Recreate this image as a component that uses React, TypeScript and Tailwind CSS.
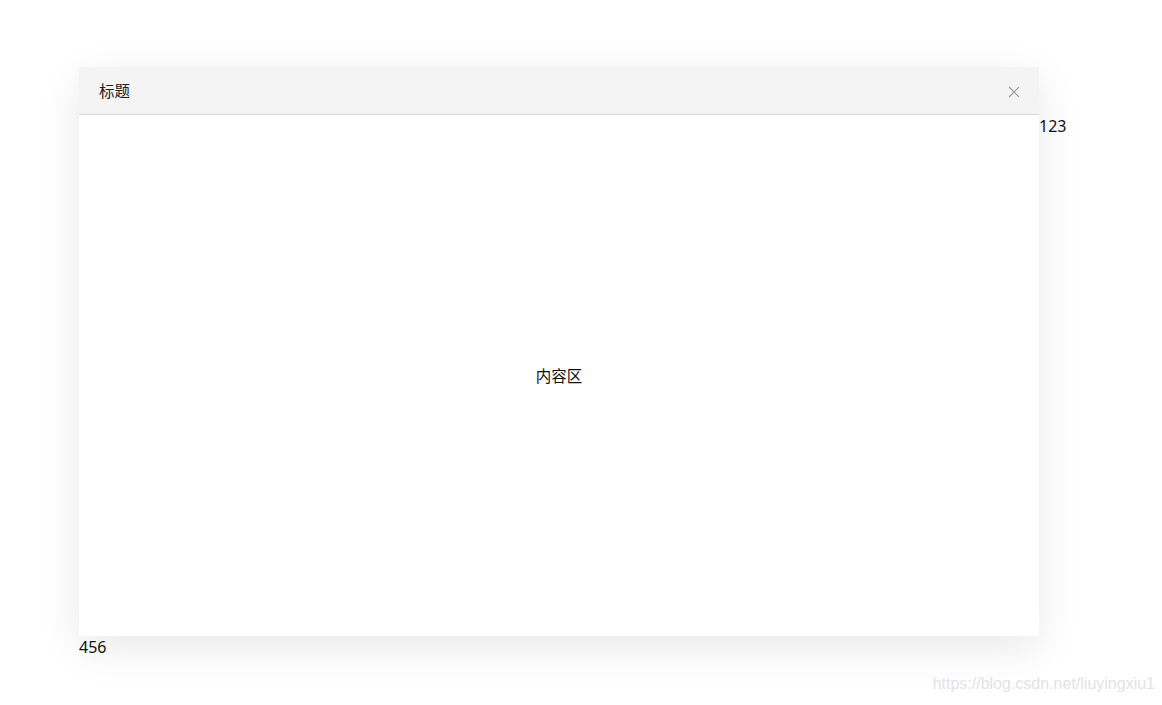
export default function App() {
  return (
    <div className="relative h-[705px] w-[1162px] overflow-hidden bg-white font-['Noto_Sans','Noto_Sans_CJK_SC',sans-serif] text-[#111]">
      <div className="pl-[79px] pt-[67px]">
        <div className="flex items-start">
          <section className="flex h-[569px] w-[960px] flex-col bg-white shadow-[0_12px_40px_rgba(0,0,0,0.09)]">
            <header className="flex h-[48px] shrink-0 items-center justify-between border-b border-[#d9d9d9] bg-[#f4f4f4] pl-[20px] pr-[19px]">
              <span className="mt-[2px] text-[15.5px] text-[#222]">标题</span>
              <svg width="12" height="12" viewBox="0 0 12 12" className="mt-[2px] text-[#9a9a9a]">
                <path d="M1 1L11 11M11 1L1 11" stroke="currentColor" strokeWidth="1.1" />
              </svg>
            </header>
            <div className="flex flex-1 items-center justify-center text-[15.5px] text-[#111]">
              <span className="mt-[2px]">内容区</span>
            </div>
          </section>
          <span className="mt-[49px] text-[16px] leading-[21px]">123</span>
        </div>
        <div className="pt-[1px] text-[16px] leading-[21px]">456</div>
      </div>
      <span className="absolute bottom-[9px] right-[7px] font-['Liberation_Sans',sans-serif] text-[16px] text-[#e3e3e3]">
        https://blog.csdn.net/liuyingxiu1
      </span>
    </div>
  );
}
